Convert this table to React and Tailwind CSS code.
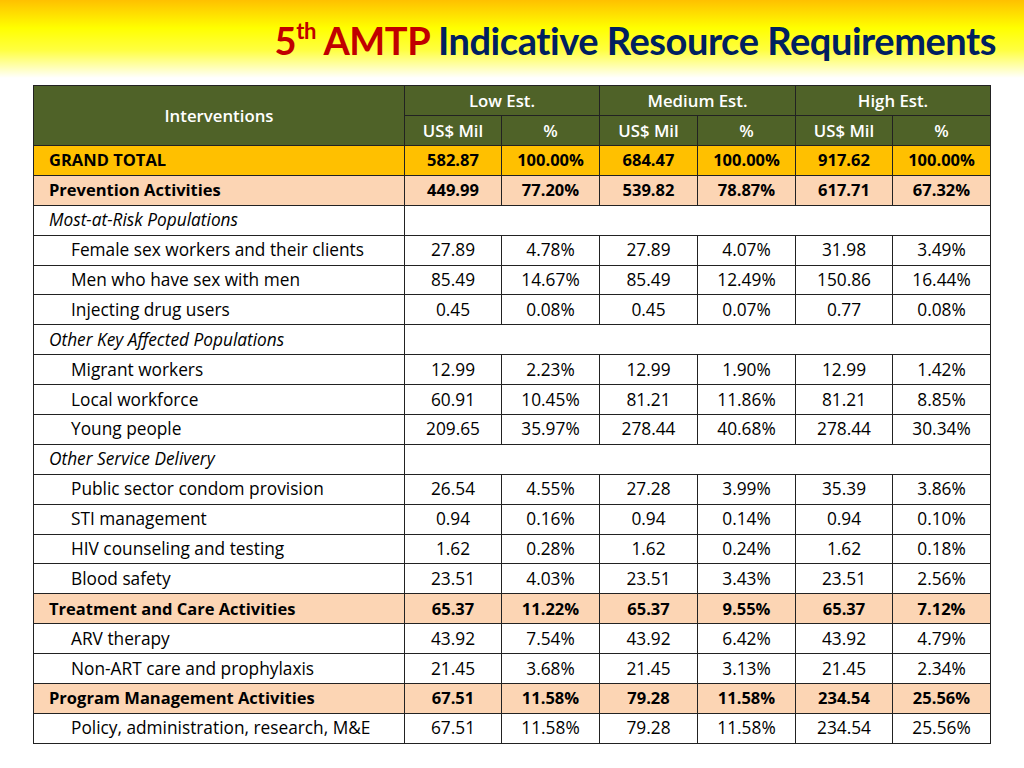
import React from "react";

const rows = [
  { t: "total", label: "GRAND TOTAL", v: ["582.87", "100.00%", "684.47", "100.00%", "917.62", "100.00%"] },
  { t: "sec", label: "Prevention Activities", v: ["449.99", "77.20%", "539.82", "78.87%", "617.71", "67.32%"] },
  { t: "grp", label: "Most-at-Risk Populations" },
  { t: "item", label: "Female sex workers and their clients", v: ["27.89", "4.78%", "27.89", "4.07%", "31.98", "3.49%"] },
  { t: "item", label: "Men who have sex with men", v: ["85.49", "14.67%", "85.49", "12.49%", "150.86", "16.44%"] },
  { t: "item", label: "Injecting drug users", v: ["0.45", "0.08%", "0.45", "0.07%", "0.77", "0.08%"] },
  { t: "grp", label: "Other Key Affected Populations" },
  { t: "item", label: "Migrant workers", v: ["12.99", "2.23%", "12.99", "1.90%", "12.99", "1.42%"] },
  { t: "item", label: "Local workforce", v: ["60.91", "10.45%", "81.21", "11.86%", "81.21", "8.85%"] },
  { t: "item", label: "Young people", v: ["209.65", "35.97%", "278.44", "40.68%", "278.44", "30.34%"] },
  { t: "grp", label: "Other Service Delivery" },
  { t: "item", label: "Public sector condom provision", v: ["26.54", "4.55%", "27.28", "3.99%", "35.39", "3.86%"] },
  { t: "item", label: "STI management", v: ["0.94", "0.16%", "0.94", "0.14%", "0.94", "0.10%"] },
  { t: "item", label: "HIV counseling and testing", v: ["1.62", "0.28%", "1.62", "0.24%", "1.62", "0.18%"] },
  { t: "item", label: "Blood safety", v: ["23.51", "4.03%", "23.51", "3.43%", "23.51", "2.56%"] },
  { t: "sec", label: "Treatment and Care Activities", v: ["65.37", "11.22%", "65.37", "9.55%", "65.37", "7.12%"] },
  { t: "item", label: "ARV therapy", v: ["43.92", "7.54%", "43.92", "6.42%", "43.92", "4.79%"] },
  { t: "item", label: "Non-ART care and prophylaxis", v: ["21.45", "3.68%", "21.45", "3.13%", "21.45", "2.34%"] },
  { t: "sec", label: "Program Management Activities", v: ["67.51", "11.58%", "79.28", "11.58%", "234.54", "25.56%"] },
  { t: "item", label: "Policy, administration, research, M&E", v: ["67.51", "11.58%", "79.28", "11.58%", "234.54", "25.56%"] },
];

export default function App() {
  return (
    <div
      className="w-[1024px] h-[768px] overflow-hidden bg-[linear-gradient(to_bottom,#ffc000_0px,#ffff00_28px,#ffff40_50px,#ffffff_78px,#ffffff_100%)]"
      style={{ fontFamily: "'Open Sans', Lato, sans-serif" }}
    >
      <div className="h-[82px] flex justify-end items-start pr-[28px] pt-[15px]">
        <h1
          className="text-[38px] leading-[50px] font-bold tracking-[-0.45px]"
          style={{ fontFamily: "Lato, 'Open Sans', sans-serif" }}
        >
          <span className="text-[#c00000]">
            5<sup className="text-[22px] top-[-0.75em]">th</sup> AMTP
          </span>{" "}
          <span className="text-[#002060]">Indicative Resource Requirements</span>
        </h1>
      </div>
      <div className="pl-[33px] pt-[3px]">
        <table className="table-fixed border-collapse w-[957px] text-[17.3px] text-black">
          <colgroup>
            <col className="w-[371px]" />
            <col className="w-[97px]" />
            <col className="w-[98px]" />
            <col className="w-[98px]" />
            <col className="w-[98px]" />
            <col className="w-[97px]" />
            <col className="w-[98px]" />
          </colgroup>
          <thead>
            <tr className="h-[30px] bg-[#4f6228] text-white text-[16.8px]">
              <th rowSpan={2} className="border-[1.5px] border-[#222] font-semibold text-center p-0">Interventions</th>
              <th colSpan={2} className="border-[1.5px] border-[#222] font-semibold p-0">Low Est.</th>
              <th colSpan={2} className="border-[1.5px] border-[#222] font-semibold p-0">Medium Est.</th>
              <th colSpan={2} className="border-[1.5px] border-[#222] font-semibold p-0">High Est.</th>
            </tr>
            <tr className="h-[30px] bg-[#4f6228] text-white text-[16.8px]">
              {["US$ Mil", "%", "US$ Mil", "%", "US$ Mil", "%"].map((h, i) => (
                <th key={i} className="border-[1.5px] border-[#222] font-semibold p-0">{h}</th>
              ))}
            </tr>
          </thead>
          <tbody>
            {rows.map((r, i) => {
              const bg =
                r.t === "total" ? "bg-[#ffc000]" : r.t === "sec" ? "bg-[#fcd5b4]" : "bg-white";
              const bold = r.t === "total" || r.t === "sec" ? "font-bold text-[16.5px]" : "";
              const label =
                r.t === "item"
                  ? "pl-[37px]"
                  : r.t === "grp"
                  ? "pl-[15px] italic"
                  : "pl-[15px]";
              return (
                <tr key={i} className={`h-[29.9px] leading-[24px] ${bg} ${bold}`}>
                  <td className={`border-[1.5px] border-[#222] text-left whitespace-nowrap p-0 ${label}`}>{r.label}</td>
                  {r.v ? (
                    r.v.map((v, j) => (
                      <td key={j} className="border-[1.5px] border-[#222] text-center p-0">{v}</td>
                    ))
                  ) : (
                    <td colSpan={6} className="border-[1.5px] border-[#222] p-0"></td>
                  )}
                </tr>
              );
            })}
          </tbody>
        </table>
      </div>
    </div>
  );
}
